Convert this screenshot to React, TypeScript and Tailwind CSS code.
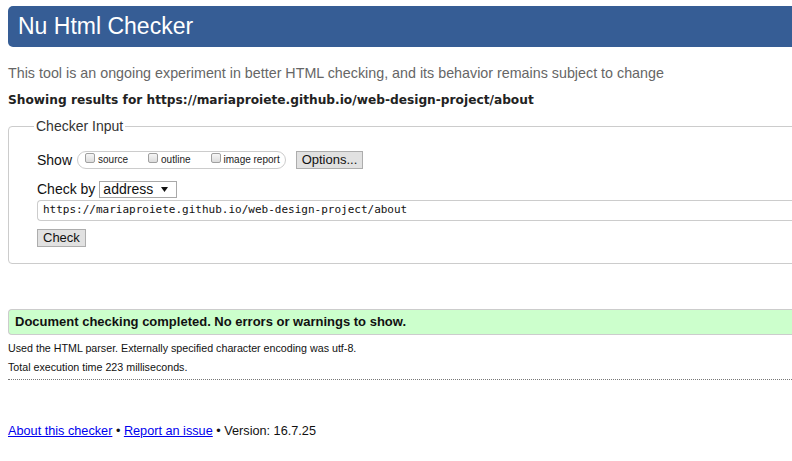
import React from 'react';

function Box({ label }: { label: string }) {
  return (
    <span className="flex items-center">
      <span className="mb-[4px] h-[10px] w-[10px] rounded-[2px] border border-[#a0a0a0] bg-gradient-to-b from-[#f6f6f6] to-[#dcdcdc]" />
      <span className="ml-[3px] text-[10px] leading-[12px] text-[#222]">{label}</span>
    </span>
  );
}

export default function App() {
  return (
    <div className="h-[461px] w-[792px] overflow-hidden bg-white font-['Liberation_Sans',Arial,sans-serif] text-[#111]">
      <div className="w-[1100px] pl-2">
        <header className="mt-[6px] flex h-[41px] items-center rounded-l-[5px] bg-[#365d95] pl-[10px] text-[23px] text-white">
          Nu Html Checker
        </header>

        <p className="mt-[18px] text-[14.3px] leading-[16px] text-[#666]">
          This tool is an ongoing experiment in better HTML checking, and its behavior remains subject to change
        </p>
        <p className="mt-[11px] font-['DejaVu_Sans',Verdana,sans-serif] text-[12.2px] font-bold leading-[16px] text-[#222]">
          Showing results for https://mariaproiete.github.io/web-design-project/about
        </p>

        <fieldset className="mt-[10px] rounded-[4px] border border-[#ccc] pb-[16px] pl-[28px]">
          <legend className="-ml-[3px] px-[2px] text-[14px] leading-[16px] text-[#333]">Checker Input</legend>

          <div className="mt-[17px] flex h-[18px] items-center text-[14px]">
            <span>Show</span>
            <div className="ml-[5px] flex h-[18px] items-center gap-[20px] rounded-full border border-[#ccc] pl-[7px] pr-[5px]">
              <Box label="source" />
              <Box label="outline" />
              <Box label="image report" />
            </div>
            <button className="ml-[10px] h-[18px] border border-[#adadad] bg-[#e1e1e1] px-[5px] text-[13px] leading-[16px]">
              Options...
            </button>
          </div>

          <div className="mt-[12px] flex h-[17px] items-center text-[14px]">
            <span>Check by</span>
            <div className="ml-[4px] flex h-[17px] w-[78px] items-center justify-between border border-[#a9a9a9] pl-[3px] pr-[8px] leading-[15px]">
              <span>address</span>
              <svg width="7" height="5" viewBox="0 0 7 5">
                <polygon points="0,0 7,0 3.5,5" fill="#111" />
              </svg>
            </div>
          </div>

          <div className="mt-[2px] flex h-[21px] items-center rounded-l-[4px] border-y border-l border-[#ccc] pl-[5px] font-['DejaVu_Sans_Mono',monospace] text-[11px] text-[#111]">
            https://mariaproiete.github.io/web-design-project/about
          </div>

          <button className="mt-[8px] block h-[18px] border border-[#adadad] bg-[#e1e1e1] px-[5px] text-[13px] leading-[16px]">
            Check
          </button>
        </fieldset>

        <div className="mt-[45px] flex h-[26px] items-center rounded-l-[4px] border-y border-l border-[#ccc] bg-[#ccffcc] pl-[6px] text-[13px] font-bold">
          Document checking completed. No errors or warnings to show.
        </div>

        <p className="mt-[4px] text-[10.7px] leading-[19px]">
          Used the HTML parser. Externally specified character encoding was utf-8.
        </p>
        <p className="text-[10.7px] leading-[19px]">Total execution time 223 milliseconds.</p>
        <div className="mt-[2px] border-t border-dotted border-[#777]" />

        <p className="mt-[43px] text-[12.7px] leading-[16px]">
          <a href="#" className="text-[#0000ee] underline">About this checker</a>
          {' • '}
          <a href="#" className="text-[#0000ee] underline">Report an issue</a>
          {' • Version: 16.7.25'}
        </p>
      </div>
    </div>
  );
}
